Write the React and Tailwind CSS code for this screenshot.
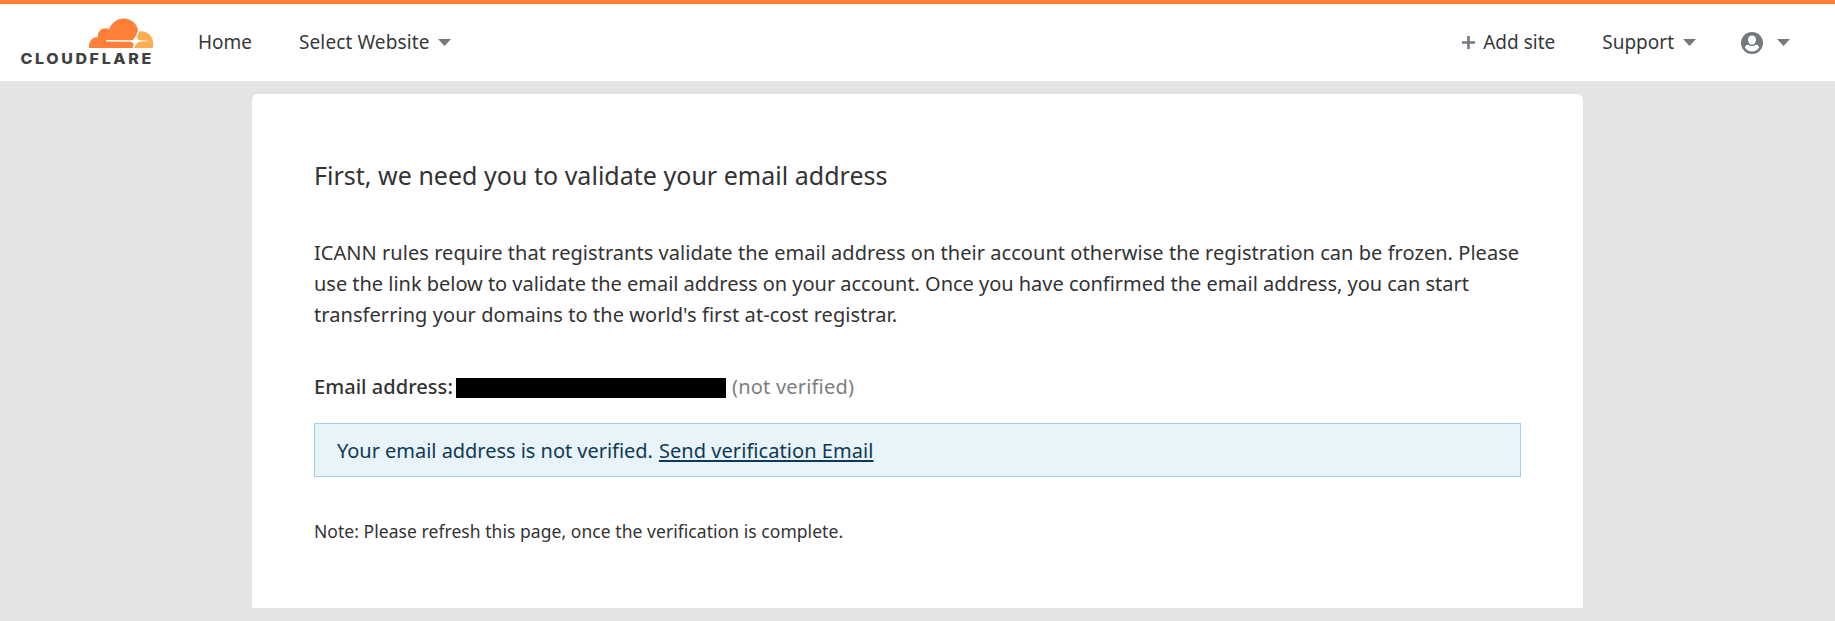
import React from "react";

function Logo() {
  return (
    <svg className="block h-12 w-[136px]" viewBox="20 17 136 48" role="img" aria-label="Cloudflare">
      <path
        fill="#ff7f37"
        d="M89 48 C88.4 41.5 92 37 98 36.9 C97.3 30.5 103.5 26 109.2 29.6 C111.5 22.6 117 18.6 123.8 18.6 C131.5 18.6 137.6 24.2 138 31.2 L136.6 33.2 C136.3 36.5 135.8 38.6 134.4 39.6 C133.6 40.2 132.7 40.3 131.5 40.2 L106.3 40 V41.4 L130.5 41.7 C132.6 41.9 133.8 43 133.5 44.8 L132.7 48 Z"
      />
      <path
        fill="#ffad51"
        d="M139 31.4 C147 30 153.8 36.4 153.1 44.2 C153.1 45.5 152.9 46.8 152.6 48 H134.2 L135.2 44.8 C135.7 43.1 137.3 41.9 139.6 41.6 L149 41.2 V40.8 L140 40.2 C138 39.9 137 38.8 137.1 37 Z"
      />
      <path fill="#fff" d="M135.4 35.4 C136.2 39.1 137.6 40.4 141.4 41.2 C137.6 42.1 136 43.5 134.7 47.3 C134.2 43.3 133 42 129 41.2 C133 40.2 134.5 39.2 135.4 35.4 Z" />
      <text
        x="20.4"
        y="63.5"
        textLength="133.5"
        lengthAdjust="spacingAndGlyphs"
        fill="#404242"
        className="font-['Inter',sans-serif] text-[14.5px] font-extrabold tracking-[2.4px]"
      >
        CLOUDFLARE
      </text>
    </svg>
  );
}

function Caret({ className = "" }) {
  return (
    <svg className={"h-[7px] w-[13px] shrink-0 " + className} viewBox="0 0 13 7" fill="#72787d">
      <path d="M0 0h13L6.5 7z" />
    </svg>
  );
}

function Plus() {
  return (
    <svg className="mt-0.5 size-[13px] shrink-0" viewBox="0 0 13 13" fill="#72787d">
      <path d="M5.2 0h2.6v5.2H13v2.6H7.8V13H5.2V7.8H0V5.2h5.2z" />
    </svg>
  );
}

function UserIcon() {
  return (
    <svg className="mt-0.5 size-[22px] shrink-0" viewBox="0 0 22 22">
      <circle cx="11" cy="11" r="11" fill="#72787d" />
      <path
        fill="#fff"
        d="M11 3.6c2.4 0 4 1.3 4 3.9 0 2.5-1.5 5.2-4 5.2S7 10 7 7.5c0-2.6 1.6-3.9 4-3.9zM7.3 12.6c1 1 2.2 1.6 3.7 1.6s2.7-.6 3.7-1.6c1.9.4 3 1.4 3.5 3-1.7 2.5-4.1 4-7.2 4s-5.5-1.5-7.2-4c.5-1.6 1.6-2.6 3.5-3z"
      />
    </svg>
  );
}

function Header() {
  return (
    <header className="flex h-[81px] items-center border-t-4 border-[#ff7f37] bg-white pr-[45px] pl-5 text-[19px] leading-7 text-[#36393a]">
      <div className="-mt-[3px]">
        <Logo />
      </div>
      <nav className="ml-[42px] flex flex-1 items-center pb-0.5 whitespace-nowrap">
        <a className="w-[54px]">Home</a>
        <a className="ml-[47px] flex items-center">
          <span className="tracking-[0.11px]">Select Website</span>
          <Caret className="mt-0.5 ml-2" />
        </a>
        <a className="ml-auto flex items-center">
          <Plus />
          <span className="ml-2">Add site</span>
        </a>
        <a className="ml-[47px] flex items-center">
          <span>Support</span>
          <Caret className="mt-0.5 ml-[9px]" />
        </a>
        <a className="ml-[45px] flex items-center">
          <UserIcon />
          <Caret className="mt-0.5 ml-3.5" />
        </a>
      </nav>
    </header>
  );
}

export default function App() {
  return (
    <div className="h-[621px] overflow-hidden bg-[#e4e4e4] font-['Noto_Sans',sans-serif]">
      <Header />
      <main className="mx-auto mt-[13px] h-[514px] w-[1331px] rounded-t-md bg-white px-[62px] pt-[63px] text-xl leading-[31px] text-[#333]">
        <h1 className="text-[25px] leading-9 tracking-[0.02px]">First, we need you to validate your email address</h1>
        <p className="mt-11 whitespace-nowrap">
          <span className="block tracking-[0.043px]">
            ICANN rules require that registrants validate the email address on their account otherwise the registration can be frozen. Please
          </span>
          <span className="block tracking-[-0.025px]">
            use the link below to validate the email address on your account. Once you have confirmed the email address, you can start
          </span>
          <span className="block tracking-[0.06px]">transferring your domains to the world's first at-cost registrar.</span>
        </p>
        <div className="mt-[41px] flex items-center">
          <span className="w-[142px] font-medium tracking-[0.05px] whitespace-nowrap">Email address:</span>
          <span className="mt-[3px] h-5 w-[270px] bg-black" />
          <span className="ml-1.5 tracking-[0.2px] text-[#7d7d7d]">(not verified)</span>
        </div>
        <div className="mt-[21px] flex h-[54px] items-center border border-[#a2cfe8] bg-[#e8f3fa] pl-[22px] text-[#0e3a55]">
          <span className="tracking-[-0.03px]">Your email address is not verified.</span>
          <a className="ml-1.5 tracking-[0.06px] underline decoration-2 underline-offset-[2px]">Send verification Email</a>
        </div>
        <p className="mt-10 text-[17.5px] leading-7 tracking-[0.05px]">
          Note: Please refresh this page, once the verification is complete.
        </p>
      </main>
    </div>
  );
}
